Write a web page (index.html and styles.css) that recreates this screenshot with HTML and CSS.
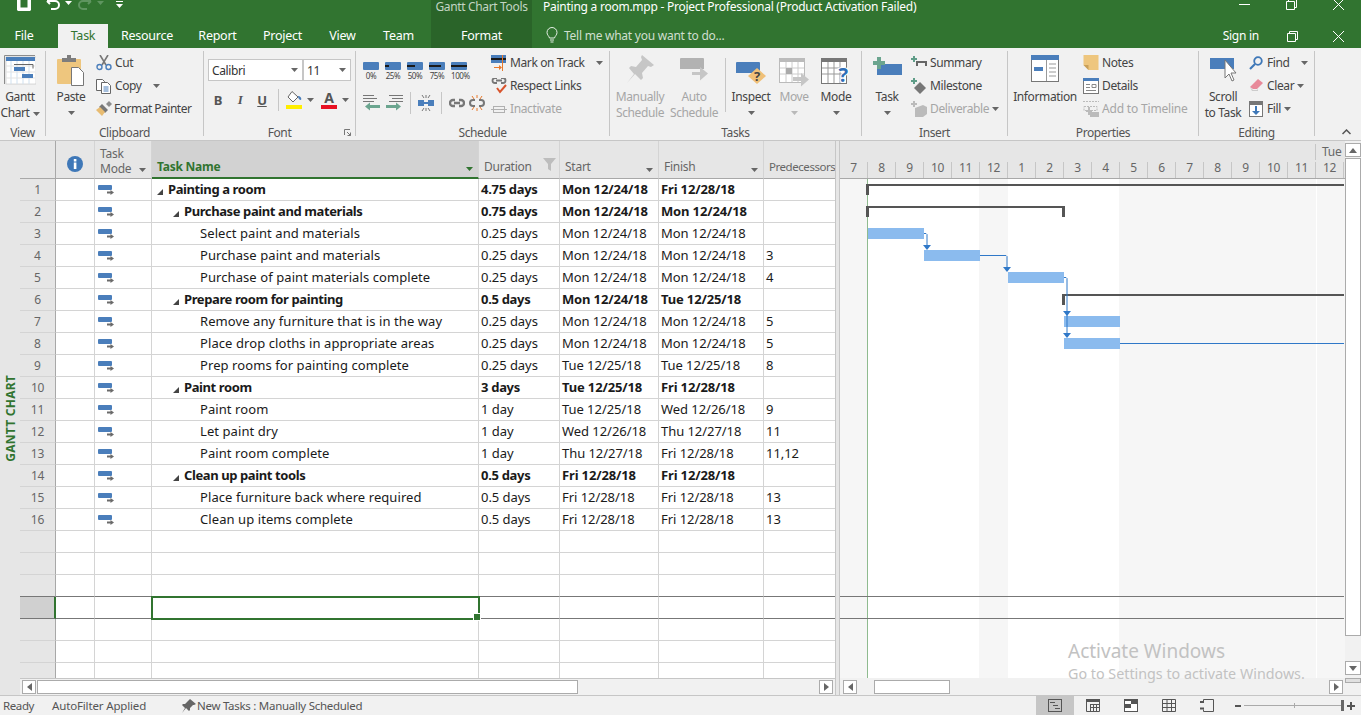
FILE: index.html
```html
<!DOCTYPE html>
<html lang="en">
  <head>
    <meta charset="UTF-8" />
    <title>Painting a room.mpp - Project Professional</title>
    <link rel="stylesheet" href="styles.css">
  </head>
  <body>
    <svg class="defs" width="0" height="0">
      <symbol id="mode" viewBox="0 0 16 12">
        <rect x="0" y="1" width="14" height="5" rx="1" fill="#4a7ebb" />
        <path d="M9 7.500h3.500V6l3.500 2.500-3.500 2.500V9.500H9z" fill="#6a6a6a" />
      </symbol>
      <symbol id="tri" viewBox="0 0 6 6">
        <polygon points="6,0 6,6 0,6" fill="#444" />
      </symbol>
      <symbol id="caret" viewBox="0 0 7 4">
        <polygon points="0,0 7,0 3.500,4" fill="#666" />
      </symbol>
      <symbol id="chain" viewBox="0 0 16 10">
        <path d="M6 2H4a3 3 0 0 0 0 6h2M10 2h2a3 3 0 0 1 0 6h-2M5 5h6" fill="none" stroke="#777" stroke-width="2.300" />
      </symbol>
    </svg>

    <!-- title bar -->
    <header class="titlebar">
      <div class="title-row">
        <div class="qa">
          <svg class="qa-save" width="14" height="11" viewBox="0 0 14 11"><path d="M0 0h3.500v7.500h7V0H14v10l-1 1H1l-1-1z" fill="#fff" /></svg>
          <svg class="qa-undo" width="14" height="10" viewBox="0 0 14 10"><path d="M1 1l3 3M1 1h8a4 4 0 0 1 0 8H5" fill="none" stroke="#fff" stroke-width="2" /></svg>
          <svg class="qa-caret" width="7" height="4"><polygon points="0,0 7,0 3.500,4" fill="#fff" /></svg>
          <svg class="qa-redo" width="14" height="10" viewBox="0 0 14 10"><path d="M13 1l-3 3M13 1H5a4 4 0 0 0 0 8h4" fill="none" stroke="#5f9560" stroke-width="2" /></svg>
          <svg class="qa-caret2" width="7" height="4"><polygon points="0,0 7,0 3.500,4" fill="#5f9560" /></svg>
          <svg class="qa-more" width="7" height="8"><rect x="0" y="0" width="7" height="1" fill="#fff" /><polygon points="0,3 7,3 3.500,7" fill="#fff" /></svg>
        </div>
        <div class="ctx-title">Gantt Chart Tools</div>
        <div class="doc-title">Painting a room.mpp - Project Professional (Product Activation Failed)</div>
        <div class="win-btns">
          <svg width="11" height="10"><rect x="0" y="4" width="11" height="1" fill="#fff" /></svg>
          <svg width="11" height="10"><path d="M.5 1.500h8v8h-8zM2.500 1.500v-2h8v8h-2" fill="none" stroke="#fff" /></svg>
          <svg width="11" height="10" viewBox="0 0 11 10"><path d="M0 -1l11 11M11 -1L0 10" stroke="#fff" /></svg>
        </div>
      </div>
      <nav class="tab-row">
        <div class="tab tab-file">File</div>
        <div class="tab tab-task active">Task</div>
        <div class="tab tab-resource">Resource</div>
        <div class="tab tab-report">Report</div>
        <div class="tab tab-project">Project</div>
        <div class="tab tab-view">View</div>
        <div class="tab tab-team">Team</div>
        <div class="tab tab-format">Format</div>
        <div class="tell-me">
          <svg width="12" height="16" viewBox="0 0 12 16"><path d="M3.500 11C3 9 1 8 1 5.500a5 5 0 0 1 10 0C11 8 9 9 8.500 11zM4 13h4M4.500 15h3" fill="none" stroke="#e6efe6" /></svg>
          <span>Tell me what you want to do...</span>
        </div>
        <div class="sign-in">Sign in</div>
        <div class="win-btns">
          <svg width="11" height="11"><path d="M.5 2.500h8v8h-8zM2.500 2.500v-2h8v8h-2" fill="none" stroke="#fff" /></svg>
          <svg width="11" height="11"><path d="M0 0l11 11M11 0L0 11" stroke="#fff" /></svg>
        </div>
      </nav>
    </header>

    <!-- ribbon -->
    <section class="ribbon">
      <div class="group g-view">
        <div class="group-body">
          <div class="big w-40">
            <div class="big-icon">
              <svg width="32" height="30" viewBox="0 0 32 30"><path d="M.5 29V.5H31" fill="none" stroke="#8c8c8c" /><rect x="2" y="2" width="30" height="27" fill="#fff" stroke="#b5b5b5" stroke-width=".5" /><rect x="2" y="2" width="29" height="4" fill="#4a7ebb" /><path d="M7 6v23M13 6v23M19 6v23M25 6v23" stroke="#cfe0ef" /><path d="M2 11h29M2 17h29M2 23h29" stroke="#e3e3e3" /><rect x="10" y="12" width="11" height="4" fill="#4a7ebb" /><rect x="18" y="19" width="11" height="4" fill="#4a7ebb" /><path d="M10 9.500h19v4" fill="none" stroke="#666" /></svg>
            </div>
            <span>Gantt</span>
            <span>Chart <svg class="caret-in" width="7" height="4"><use href="#caret" /></svg></span>
          </div>
        </div>
        <div class="group-label">View</div>
      </div>

      <div class="group g-clip">
        <div class="group-body">
          <div class="big w-50">
            <div class="big-icon">
              <svg width="30" height="31" viewBox="0 0 30 31"><rect x="1" y="4" width="24" height="25" rx="1" fill="#eec67e" /><path d="M6 7V3h5V0h4v3h5v4z" fill="#7d7d7d" /><path d="M15.500 12.500h7l5 5v13h-12z" fill="#fff" stroke="#777" /></svg>
            </div>
            <span>Paste</span>
            <svg class="caret-line" width="7" height="4"><use href="#caret" /></svg>
          </div>
          <div class="stack">
            <div class="small"><svg width="16" height="16" viewBox="0 0 16 16"><path d="M4 0l6 10M12 0L6 10" stroke="#777" stroke-width="1.600" /><circle cx="3.500" cy="12" r="2.500" fill="none" stroke="#4a7ebb" stroke-width="1.400" /><circle cx="12.500" cy="12" r="2.500" fill="none" stroke="#4a7ebb" stroke-width="1.400" /></svg><span>Cut</span></div>
            <div class="small"><svg width="16" height="16" viewBox="0 0 16 16"><path d="M.5 1.500h6l2 2v9h-8z" fill="#fff" stroke="#666" /><path d="M5.500 4.500h6l3 3v8h-9z" fill="#fff" stroke="#666" /><path d="M7.500 9h5M7.500 11h5M7.500 13h5" stroke="#4a7ebb" /></svg><span>Copy</span><svg class="caret-far" width="7" height="4"><use href="#caret" /></svg></div>
            <div class="small"><svg width="16" height="16" viewBox="0 0 16 16"><path d="M6 3l6 6-3 3-6-6z" fill="#777" /><path d="M10 3l3-3 3 3-3 3z" fill="#8c8c8c" /><path d="M4 6l5 5-3 4-6-6z" fill="#e8bc72" /></svg><span class="tight">Format Painter</span></div>
          </div>
        </div>
        <div class="group-label">Clipboard</div>
      </div>

      <div class="group g-font">
        <div class="group-body font-body">
          <div class="combos">
            <div class="combo combo-name">Calibri<svg width="7" height="4"><use href="#caret" /></svg></div>
            <div class="combo combo-size">11<svg width="7" height="4"><use href="#caret" /></svg></div>
          </div>
          <div class="font-tools">
            <b class="fmt">B</b>
            <i class="fmt fmt-i">I</i>
            <u class="fmt fmt-u">U</u>
            <div class="v-sep sep-font"></div>
            <svg class="fill-ico" width="16" height="18" viewBox="0 0 16 18"><path d="M6 .5l6 5.500-5 5L2 6z" fill="#fff" stroke="#666" /><path d="M12 5c2 0 4 2 3 4-2 0-3-2-3-4z" fill="#4a7ebb" /><rect x="0" y="14" width="16" height="4" fill="#ffee00" /></svg>
            <svg class="caret-sm" width="7" height="4"><use href="#caret" /></svg>
            <div class="font-a"><span>A</span></div>
            <svg class="caret-sm" width="7" height="4"><use href="#caret" /></svg>
          </div>
        </div>
        <div class="group-label">Font</div>
        <svg class="launcher" width="7" height="7" viewBox="0 0 7 7"><path d="M.5 6V.5H6M3 3l3.500 3.500M6.500 3.500v3h-3" fill="none" stroke="#777" /></svg>
      </div>

      <div class="group g-sched">
        <div class="group-body">
          <div class="sched-left">
            <div class="pct-row">
              <div class="pct"><span class="pct-bar"></span><em>0%</em></div>
              <div class="pct"><span class="pct-bar"><i class="p25"></i></span><em>25%</em></div>
              <div class="pct"><span class="pct-bar"><i class="p50"></i></span><em>50%</em></div>
              <div class="pct"><span class="pct-bar"><i class="p75"></i></span><em>75%</em></div>
              <div class="pct"><span class="pct-bar"><i class="p100"></i></span><em>100%</em></div>
            </div>
            <div class="sched-tools">
              <svg width="18" height="16" viewBox="0 0 18 16"><path d="M0 .5h11M0 3.500h14M0 6.500h11" stroke="#777" /><path d="M2 11.500l5-4v2.500h10v3H7v2.500z" fill="#6ba58f" /></svg>
              <svg width="18" height="16" viewBox="0 0 18 16"><path d="M4 .5h14M7 3.500h11M4 6.500h14" stroke="#777" /><path d="M16 11.500l-5-4v2.500H1v3h10v2.500z" fill="#6ba58f" /></svg>
              <div class="v-sep"></div>
              <svg width="16" height="16" viewBox="0 0 16 16"><path d="M0 5h6v6H0zM10 5h6v6h-6z" fill="#4a7ebb" /><rect x="6" y="7" width="4" height="2" fill="#4a7ebb" /><path d="M4 0l2 3M12 0l-2 3M8 0v3M4 16l2-3M12 16l-2-3M8 16v-3" stroke="#777" /></svg>
              <div class="v-sep"></div>
              <svg width="16" height="10"><use href="#chain" /></svg>
              <svg width="16" height="16" viewBox="0 0 16 16"><path d="M6 5H4a3 3 0 0 0 0 6h2M10 5h2a3 3 0 0 1 0 6h-2" fill="none" stroke="#777" stroke-width="2" /><path d="M8 0v3M8 13v3M3 1l2 3M13 1l-2 3M3 15l2-3M13 15l-2-3" stroke="#e8792b" /></svg>
            </div>
          </div>
          <div class="stack">
            <div class="small"><svg width="16" height="16" viewBox="0 0 16 16"><rect x="0" y="0" width="15" height="8" fill="#4a7ebb" /><rect x="0" y="3" width="15" height="2" fill="#1a1a1a" /><path d="M11.500 0v16" stroke="#e8792b" /><path d="M3 12h5V10l3 2.500-3 2.500v-2H3z" fill="#e8792b" /></svg><span>Mark on Track</span><svg class="caret-far" width="7" height="4"><use href="#caret" /></svg></div>
            <div class="small"><svg width="16" height="16" viewBox="0 0 16 16"><path d="M6 0H4a2.500 2.500 0 0 0 0 5h2M10 0h2a2.500 2.500 0 0 1 0 5h-2M5 2.500h6" fill="none" stroke="#777" stroke-width="1.800" /><path d="M6 10l3 4 6-7" fill="none" stroke="#d8532b" stroke-width="2" /></svg><span>Respect Links</span></div>
            <div class="small off"><svg width="16" height="16" viewBox="0 0 16 16"><rect x="2.500" y="5.500" width="11" height="6" fill="none" stroke="#b0b0b0" /><path d="M0 8.500h16" stroke="#b0b0b0" /></svg><span>Inactivate</span></div>
          </div>
        </div>
        <div class="group-label">Schedule</div>
      </div>

      <div class="group g-tasks">
        <div class="group-body">
          <div class="big off w-60">
            <div class="big-icon">
              <svg width="28" height="29" viewBox="0 0 28 29"><path d="M16 0l12 10-3 2-3-1-6 7 1 5-2 2-6-6-8 9 7-9-5-6 2-2 5 1 6-7-1-3z" fill="#c6c6c6" /></svg>
            </div>
            <span>Manually</span>
            <span>Schedule</span>
          </div>
          <div class="big off w-48">
            <div class="big-icon">
              <svg width="29" height="27" viewBox="0 0 29 27"><path d="M0 4a1 1 0 0 1 1-1h22a1 1 0 0 1 1 1v10H0z" fill="#b2b2b2" /><path d="M12 17h8V12l8 6.500-8 7V20h-8z" fill="#c6c6c6" /></svg>
            </div>
            <span>Auto</span>
            <span>Schedule</span>
          </div>
          <div class="v-sep sep-tall"></div>
          <div class="big w-42">
            <div class="big-icon">
              <svg width="31" height="31" viewBox="0 0 31 31"><path d="M0 8a1 1 0 0 1 1-1h22a1 1 0 0 1 1 1v10H0z" fill="#4a7ebb" /><path d="M21 13l9 8-9 8-9-8z" fill="#f0c078" /><text x="21" y="26" text-anchor="middle" class="qmark">?</text></svg>
            </div>
            <span>Inspect</span>
            <svg class="caret-line" width="7" height="4"><use href="#caret" /></svg>
          </div>
          <div class="big off w-44">
            <div class="big-icon">
              <svg width="30" height="32" viewBox="0 0 30 32"><rect x=".5" y="5.500" width="25" height="22" fill="#fff" stroke="#bbb" /><rect x="0" y="3" width="26" height="4" fill="#bbb" /><path d="M7 7v20M13 7v20M19 7v20M1 13h24M1 19h24" stroke="#ccc" /><rect x="7" y="13" width="6" height="6" fill="#aaa" /><path d="M14 22h8v-4l8 6.500-8 7V26h-8z" fill="#c6c6c6" /></svg>
            </div>
            <span>Move</span>
            <svg class="caret-line caret-off" width="7" height="4"><use href="#caret" /></svg>
          </div>
          <div class="big w-40">
            <div class="big-icon">
              <svg width="30" height="34" viewBox="0 0 30 34"><rect x=".5" y="5.500" width="25" height="23" fill="#fff" stroke="#777" /><rect x="0" y="3" width="26" height="4" fill="#777" /><path d="M7 7v21M13 7v21M19 7v21M1 13h24M1 19h24" stroke="#999" /><text x="22" y="27" text-anchor="middle" class="qmark qmark-blue">?</text></svg>
            </div>
            <span>Mode</span>
            <svg class="caret-line" width="7" height="4"><use href="#caret" /></svg>
          </div>
        </div>
        <div class="group-label">Tasks</div>
      </div>

      <div class="group g-insert">
        <div class="group-body">
          <div class="big w-38">
            <div class="big-icon">
              <svg width="29" height="24" viewBox="0 0 29 24"><rect x="4" y="9" width="25" height="11" fill="#4a7ebb" /><path d="M4 2h4v4h4v4H8v4H4v-4H0V6h4z" fill="#6ba58f" /></svg>
            </div>
            <span>Task</span>
            <svg class="caret-line" width="7" height="4"><use href="#caret" /></svg>
          </div>
          <div class="stack">
            <div class="small"><svg width="16" height="14" viewBox="0 0 16 14"><path d="M2 0h2v2h2v2H4v2H2V4H0V2h2z" fill="#5f9d88" /><path d="M5 5h11v5h-2V7H7v3H5z" fill="#666" /></svg><span>Summary</span></div>
            <div class="small"><svg width="16" height="16" viewBox="0 0 16 16"><path d="M2 0h2v2h2v2H4v2H2V4H0V2h2z" fill="#5f9d88" /><path d="M9 4l6 6-6 6-6-6z" fill="#777" /></svg><span>Milestone</span></div>
            <div class="small off"><svg width="16" height="16" viewBox="0 0 16 16"><path d="M2 0h2v2h2v2H4v2H2V4H0V2h2z" fill="#bbb" /><path d="M4 7l8-3 4 2v7l-4 3H4z" fill="#bbb" /></svg><span>Deliverable</span><svg class="caret-near" width="7" height="4"><use href="#caret" /></svg></div>
          </div>
        </div>
        <div class="group-label">Insert</div>
      </div>

      <div class="group g-props">
        <div class="group-body">
          <div class="big w-66">
            <div class="big-icon">
              <svg width="28" height="27" viewBox="0 0 28 27"><rect x=".5" y=".5" width="27" height="26" fill="#fff" stroke="#777" /><rect x="0" y="0" width="28" height="5" fill="#4a7ebb" /><path d="M15.500 5v21" stroke="#999" /><rect x="3" y="12" width="9" height="4" fill="#4a7ebb" /><path d="M18 9h7M18 13h7M18 17h7M18 21h7" stroke="#999" /></svg>
            </div>
            <span>Information</span>
          </div>
          <div class="stack">
            <div class="small"><svg width="15" height="15" viewBox="0 0 15 15"><path d="M0 0h15v15H5l-5-5z" fill="#eec67e" /><path d="M0 10h5v5z" fill="#c9a05a" /></svg><span>Notes</span></div>
            <div class="small"><svg width="16" height="16" viewBox="0 0 16 16"><rect x=".5" y=".5" width="15" height="15" fill="#fff" stroke="#777" /><rect x="0" y="0" width="16" height="3" fill="#4a7ebb" /><path d="M3 6.500h4M3 9.500h4M3 12.500h10M9 6.500h4v3H9z" fill="none" stroke="#888" /></svg><span>Details</span></div>
            <div class="small off"><svg width="16" height="16" viewBox="0 0 16 16"><path d="M0 .5h16M1 5.500h13v4H1z" fill="none" stroke="#bbb" stroke-dasharray="2 1" /><path d="M5 6h2v3h2v2H7v3H5v-3H3V9h2z" fill="#bbb" /><rect x="7" y="11" width="9" height="5" fill="#bbb" /></svg><span class="wide">Add to Timeline</span></div>
          </div>
        </div>
        <div class="group-label">Properties</div>
      </div>

      <div class="group g-edit">
        <div class="group-body">
          <div class="big w-40">
            <div class="big-icon">
              <svg width="27" height="28" viewBox="0 0 27 28"><rect x="0" y="3" width="24" height="11" fill="#4a7ebb" /><path d="M15 5v18l4-4 3 7 2-1-3-7h5z" fill="#fff" stroke="#777" /></svg>
            </div>
            <span>Scroll</span>
            <span>to Task</span>
          </div>
          <div class="stack">
            <div class="small"><svg width="14" height="14" viewBox="0 0 14 14"><circle cx="9" cy="5" r="3.800" fill="none" stroke="#3f78b8" stroke-width="1.800" /><path d="M6 8l-5 5" stroke="#3f78b8" stroke-width="2.200" /></svg><span>Find</span><svg class="caret-far" width="7" height="4"><use href="#caret" /></svg></div>
            <div class="small"><svg width="14" height="14" viewBox="0 0 14 14"><path d="M9 0l5 4-6 6H4L1 8z" fill="#e88a9a" /><path d="M1 8l3 3h4l1-1v2H3z" fill="#ccc" /></svg><span>Clear</span><svg class="caret-near" width="7" height="4"><use href="#caret" /></svg></div>
            <div class="small"><svg width="14" height="16" viewBox="0 0 14 16"><rect x=".5" y=".5" width="13" height="15" fill="#fff" stroke="#777" /><rect x="0" y="0" width="14" height="4" fill="#777" /><path d="M6 5h2v5h3l-4 4-4-4h3z" fill="#3f78b8" /></svg><span>Fill</span><svg class="caret-near" width="7" height="4"><use href="#caret" /></svg></div>
          </div>
        </div>
        <div class="group-label">Editing</div>
      </div>

      <svg class="collapse" width="9" height="6" viewBox="0 0 9 6"><path d="M.5 5L4.500 1l4 4" fill="none" stroke="#555" stroke-width="1.500" /></svg>
    </section>

    <!-- main view -->
    <main class="workspace">
      <div class="view-strip"><span>GANTT CHART</span></div>

      <div class="grid-pane">
        <div class="grid-clip">
          <table class="grid">
            <colgroup>
              <col class="c-num" /><col class="c-ind" /><col class="c-mode" /><col class="c-name" /><col class="c-dur" /><col class="c-start" /><col class="c-fin" /><col class="c-pred" />
            </colgroup>
            <thead>
              <tr>
                <th class="num"></th>
                <th class="ind"><svg width="16" height="16" viewBox="0 0 16 16"><circle cx="8" cy="8" r="8" fill="#3f78b8" /><rect x="6.800" y="6.500" width="2.600" height="6.500" fill="#fff" /><rect x="6.800" y="3" width="2.600" height="2.500" fill="#fff" /></svg></th>
                <th class="mode-h">Task<br />Mode<svg class="h-caret" width="7" height="4"><use href="#caret" /></svg></th>
                <th class="name-h">Task Name<svg class="h-caret" width="7" height="4"><polygon points="0,0 7,0 3.500,4" fill="#317430" /></svg></th>
                <th>Duration<svg class="h-filter" width="13" height="13" viewBox="0 0 13 13"><path d="M0 0h13L8 6v7l-3-2V6z" fill="#bdbdbd" /></svg></th>
                <th>Start<svg class="h-caret" width="7" height="4"><use href="#caret" /></svg></th>
                <th>Finish<svg class="h-caret" width="7" height="4"><use href="#caret" /></svg></th>
                <th class="pred-h">Predecessors</th>
              </tr>
            </thead>
            <tbody>
              <tr class="sum"><td class="num">1</td><td></td><td class="md"><svg width="16" height="12"><use href="#mode" /></svg></td><td class="nm l0"><svg width="6" height="6"><use href="#tri" /></svg>Painting a room</td><td>4.75 days</td><td class="dt">Mon 12/24/18</td><td class="dt">Fri 12/28/18</td><td></td></tr>
              <tr class="sum"><td class="num">2</td><td></td><td class="md"><svg width="16" height="12"><use href="#mode" /></svg></td><td class="nm l1"><svg width="6" height="6"><use href="#tri" /></svg>Purchase paint and materials</td><td>0.75 days</td><td class="dt">Mon 12/24/18</td><td class="dt">Mon 12/24/18</td><td></td></tr>
              <tr><td class="num">3</td><td></td><td class="md"><svg width="16" height="12"><use href="#mode" /></svg></td><td class="nm l2">Select paint and materials</td><td>0.25 days</td><td class="dt">Mon 12/24/18</td><td class="dt">Mon 12/24/18</td><td></td></tr>
              <tr><td class="num">4</td><td></td><td class="md"><svg width="16" height="12"><use href="#mode" /></svg></td><td class="nm l2">Purchase paint and materials</td><td>0.25 days</td><td class="dt">Mon 12/24/18</td><td class="dt">Mon 12/24/18</td><td>3</td></tr>
              <tr><td class="num">5</td><td></td><td class="md"><svg width="16" height="12"><use href="#mode" /></svg></td><td class="nm l2">Purchase of paint materials complete</td><td>0.25 days</td><td class="dt">Mon 12/24/18</td><td class="dt">Mon 12/24/18</td><td>4</td></tr>
              <tr class="sum"><td class="num">6</td><td></td><td class="md"><svg width="16" height="12"><use href="#mode" /></svg></td><td class="nm l1"><svg width="6" height="6"><use href="#tri" /></svg>Prepare room for painting</td><td>0.5 days</td><td class="dt">Mon 12/24/18</td><td class="dt">Tue 12/25/18</td><td></td></tr>
              <tr><td class="num">7</td><td></td><td class="md"><svg width="16" height="12"><use href="#mode" /></svg></td><td class="nm l2">Remove any furniture that is in the way</td><td>0.25 days</td><td class="dt">Mon 12/24/18</td><td class="dt">Mon 12/24/18</td><td>5</td></tr>
              <tr><td class="num">8</td><td></td><td class="md"><svg width="16" height="12"><use href="#mode" /></svg></td><td class="nm l2">Place drop cloths in appropriate areas</td><td>0.25 days</td><td class="dt">Mon 12/24/18</td><td class="dt">Mon 12/24/18</td><td>5</td></tr>
              <tr><td class="num">9</td><td></td><td class="md"><svg width="16" height="12"><use href="#mode" /></svg></td><td class="nm l2">Prep rooms for painting complete</td><td>0.25 days</td><td class="dt">Tue 12/25/18</td><td class="dt">Tue 12/25/18</td><td>8</td></tr>
              <tr class="sum"><td class="num">10</td><td></td><td class="md"><svg width="16" height="12"><use href="#mode" /></svg></td><td class="nm l1"><svg width="6" height="6"><use href="#tri" /></svg>Paint room</td><td>3 days</td><td class="dt">Tue 12/25/18</td><td class="dt">Fri 12/28/18</td><td></td></tr>
              <tr><td class="num">11</td><td></td><td class="md"><svg width="16" height="12"><use href="#mode" /></svg></td><td class="nm l2">Paint room</td><td>1 day</td><td class="dt">Tue 12/25/18</td><td class="dt">Wed 12/26/18</td><td>9</td></tr>
              <tr><td class="num">12</td><td></td><td class="md"><svg width="16" height="12"><use href="#mode" /></svg></td><td class="nm l2">Let paint dry</td><td>1 day</td><td class="dt">Wed 12/26/18</td><td class="dt">Thu 12/27/18</td><td>11</td></tr>
              <tr><td class="num">13</td><td></td><td class="md"><svg width="16" height="12"><use href="#mode" /></svg></td><td class="nm l2">Paint room complete</td><td>1 day</td><td class="dt">Thu 12/27/18</td><td class="dt">Fri 12/28/18</td><td>11,12</td></tr>
              <tr class="sum"><td class="num">14</td><td></td><td class="md"><svg width="16" height="12"><use href="#mode" /></svg></td><td class="nm l1"><svg width="6" height="6"><use href="#tri" /></svg>Clean up paint tools</td><td>0.5 days</td><td class="dt">Fri 12/28/18</td><td class="dt">Fri 12/28/18</td><td></td></tr>
              <tr><td class="num">15</td><td></td><td class="md"><svg width="16" height="12"><use href="#mode" /></svg></td><td class="nm l2">Place furniture back where required</td><td>0.5 days</td><td class="dt">Fri 12/28/18</td><td class="dt">Fri 12/28/18</td><td>13</td></tr>
              <tr><td class="num">16</td><td></td><td class="md"><svg width="16" height="12"><use href="#mode" /></svg></td><td class="nm l2">Clean up items complete</td><td>0.5 days</td><td class="dt">Fri 12/28/18</td><td class="dt">Fri 12/28/18</td><td>13</td></tr>
              <tr><td class="num"></td><td></td><td></td><td></td><td></td><td></td><td></td><td></td></tr>
              <tr><td class="num"></td><td></td><td></td><td></td><td></td><td></td><td></td><td></td></tr>
              <tr class="before-sel"><td class="num"></td><td></td><td></td><td></td><td></td><td></td><td></td><td></td></tr>
              <tr class="sel"><td class="num"></td><td></td><td></td><td class="cell-sel"></td><td></td><td></td><td></td><td></td></tr>
              <tr><td class="num"></td><td></td><td></td><td></td><td></td><td></td><td></td><td></td></tr>
              <tr><td class="num"></td><td></td><td></td><td></td><td></td><td></td><td></td><td></td></tr>
              <tr><td class="num"></td><td></td><td></td><td></td><td></td><td></td><td></td><td></td></tr>
            </tbody>
          </table>
        </div>
        <div class="hscroll grid-scroll">
          <div class="sb-btn"><svg width="5" height="8"><polygon points="5,0 5,8 0,4" fill="#666" /></svg></div>
          <div class="sb-thumb thumb-grid"></div>
          <div class="sb-btn sb-end"><svg width="5" height="8"><polygon points="0,0 0,8 5,4" fill="#666" /></svg></div>
        </div>
      </div>

      <div class="divider"></div>

      <div class="chart-pane">
        <div class="timescale">
          <div class="tier-top"><span>Tue</span></div>
          <div class="tier-hours">
            <span class="first">7</span><span>8</span><span>9</span><span>10</span><span>11</span><span>12</span><span>1</span><span>2</span><span>3</span><span>4</span><span>5</span><span>6</span><span>7</span><span>8</span><span>9</span><span>10</span><span>11</span><span>12</span>
          </div>
        </div>
        <svg class="gantt" width="505" height="499" viewBox="840 179 505 499">
          <g fill="#f6f6f6">
            <rect x="840" y="179" width="27" height="499" />
            <rect x="979" y="179" width="29" height="499" />
            <rect x="1119" y="179" width="197" height="499" />
            <rect x="1317" y="179" width="28" height="499" />
          </g>
          <rect x="867" y="179" width="1" height="499" fill="#8fbb8f" />
          <path d="M840 596.500h504M840 618.500h504" stroke="#777" />
          <g fill="#8bbbee">
            <rect x="868" y="228" width="56" height="11" />
            <rect x="924" y="250" width="56" height="11" />
            <rect x="1008" y="272" width="56" height="11" />
            <rect x="1064" y="316" width="56" height="11" />
            <rect x="1064" y="338" width="56" height="11" />
          </g>
          <g fill="#555">
            <path d="M866 184h478v2H869v9h-3z" />
            <path d="M866 206h199v11h-3v-9H869v9h-3z" />
            <path d="M1062 294h282v2h-279v9h-3z" />
          </g>
          <g fill="none" stroke="#2f78c8">
            <path d="M924 233.500h2l1 1V246" />
            <path d="M980 255.500h26l1 1V268" />
            <path d="M1064 277.500h2l1 1V334" />
            <path d="M1120 343.500h224" />
          </g>
          <g fill="#2f78c8">
            <polygon points="923,245 931,245 927,250" />
            <polygon points="1003,267 1011,267 1007,272" />
            <polygon points="1063,311 1071,311 1067,316" />
            <polygon points="1063,333 1071,333 1067,338" />
          </g>
        </svg>
        <div class="hscroll chart-scroll">
          <div class="sb-btn"><svg width="5" height="8"><polygon points="5,0 5,8 0,4" fill="#666" /></svg></div>
          <div class="sb-thumb thumb-chart"></div>
          <div class="sb-btn sb-end"><svg width="5" height="8"><polygon points="0,0 0,8 5,4" fill="#666" /></svg></div>
        </div>
      </div>

      <div class="vscroll">
        <div class="sb-btn v-btn"><svg width="8" height="5"><polygon points="0,5 8,5 4,0" fill="#666" /></svg></div>
        <div class="sb-thumb v-thumb"></div>
        <div class="sb-btn v-btn v-down"><svg width="8" height="5"><polygon points="0,0 8,0 4,5" fill="#666" /></svg></div>
        <div class="v-grip"></div>
      </div>

      <div class="activate">
        <div class="act-1">Activate Windows</div>
        <div class="act-2">Go to Settings to activate Windows.</div>
      </div>
    </main>

    <!-- status bar -->
    <footer class="statusbar">
      <span class="st-ready">Ready</span>
      <span class="st-filter">AutoFilter Applied</span>
      <svg class="st-pin" width="14" height="14" viewBox="0 0 14 14"><path d="M8 0l6 5-2 1-1 0-3 3 0 2-1 1-3-3-4 5 3-5-3-3 1-1 2 0 3-3z" fill="#666" /></svg>
      <span class="st-new">New Tasks : Manually Scheduled</span>
      <div class="views">
        <div class="view-btn on"><svg width="14" height="13" viewBox="0 0 14 13"><rect x=".5" y=".5" width="13" height="12" fill="none" stroke="#555" /><path d="M2 3.500h5M5 6.500h5M7 9.500h5" stroke="#555" /></svg></div>
        <div class="view-btn"><svg width="14" height="13" viewBox="0 0 14 13"><rect x="0" y="0" width="14" height="3" fill="#555" /><path d="M.5 3v9.500h13V3M4.500 5v8M7.500 5v8M10.500 5v8M5 5.500h8M5 8.500h8" fill="none" stroke="#555" /></svg></div>
        <div class="view-btn"><svg width="14" height="13" viewBox="0 0 14 13"><rect x=".5" y=".5" width="13" height="12" fill="#fff" stroke="#555" /><rect x="0" y="0" width="14" height="2" fill="#555" /><rect x="7" y="2" width="7" height="3" fill="#555" /><rect x="0" y="5" width="7" height="4" fill="#555" /></svg></div>
        <div class="view-btn"><svg width="14" height="13" viewBox="0 0 14 13"><path d="M.5.500h13v12H.5zM5 .5v12M9.500 .5v12M.5 4.500h13M.5 8.500h13" fill="none" stroke="#555" /></svg></div>
        <div class="view-btn"><svg width="14" height="13" viewBox="0 0 14 13"><path d="M3.500 .5h10v12h-10" fill="none" stroke="#555" /><path d="M0 3h4M0 9.500h4" stroke="#555" stroke-width="2" /><path d="M3.500 .5v2M3.500 10.500v2" stroke="#555" /></svg></div>
      </div>
      <div class="zoom-ctl">
        <span class="z-minus"></span>
        <div class="z-track"><i class="z-mid"></i><i class="z-thumb"></i></div>
        <span class="z-plus"></span>
      </div>
    </footer>
  </body>
</html>
```

FILE: styles.css
```css
* {
  margin: 0;
  padding: 0;
  box-sizing: border-box;
}

body {
  width: 1361px;
  height: 715px;
  overflow: hidden;
  background: #f1f1f1;
  color: #444;
  font-family: "Noto Sans", "Open Sans", sans-serif;
  font-size: 12px;
  letter-spacing: -0.25px;
}

svg {
  display: block;
  flex: none;
}

.defs {
  position: absolute;
}

/* title bar */
.titlebar {
  height: 48px;
  background: #317430;
  color: #fff;
}
.title-row,
.tab-row {
  display: flex;
  height: 24px;
}
.qa {
  display: flex;
  align-items: flex-start;
  width: 431px;
  padding-left: 17px;
}
.qa-undo {
  margin-left: 15px;
}
.qa-caret {
  margin: 1px 0 0 5px;
}
.qa-redo {
  margin-left: 6px;
}
.qa-caret2 {
  margin: 1px 0 0 5px;
}
.qa-more {
  margin: 1px 0 0 12px;
}
.ctx-title {
  width: 101px;
  background: #2a6429;
  color: #c3d5c3;
  text-align: center;
  line-height: 14px;
  letter-spacing: -0.35px;
}
.doc-title {
  padding-left: 11px;
  line-height: 14px;
}
.win-btns {
  display: flex;
  margin-left: auto;
  padding-right: 17px;
}
.title-row .win-btns {
  gap: 36px;
}
.tab-row .win-btns {
  gap: 35px;
  margin-left: 28px;
  padding-top: 7px;
  padding-right: 17px;
}
.tab {
  text-align: center;
  line-height: 24px;
  font-size: 12.500px;
}
.tab.active {
  background: #f1f1f1;
  color: #317430;
}
.tab-file {
  width: 48px;
  margin-right: 10px;
}
.tab-task {
  width: 50px;
}
.tab-resource {
  width: 78px;
}
.tab-report {
  width: 63px;
}
.tab-project {
  width: 67px;
}
.tab-view {
  width: 53px;
}
.tab-team {
  width: 59px;
  margin-right: 3px;
}
.tab-format {
  width: 101px;
  background: #2a6429;
}
.tell-me {
  display: flex;
  align-items: center;
  gap: 6px;
  height: 22px;
  margin-left: 14px;
  color: #cfdfcf;
}
.sign-in {
  margin-left: auto;
  line-height: 24px;
}

/* ribbon */
.ribbon {
  position: relative;
  display: flex;
  height: 93px;
  padding-top: 3px;
  background: #f1f1f1;
  border-bottom: 1px solid #c6c6c6;
  letter-spacing: -0.38px;
}
.group {
  position: relative;
  display: flex;
  flex-direction: column;
  height: 85px;
  border-right: 1px solid #c6c6c6;
}
.group-body {
  display: flex;
  height: 73px;
}
.group-label {
  height: 12px;
  line-height: 18px;
  text-align: center;
  color: #555;
}
.g-view { width: 46px; }
.g-clip { width: 158px; }
.g-font { width: 152px; }
.g-sched { width: 254px; }
.g-tasks { width: 252px; }
.g-insert { width: 146px; }
.g-props { width: 191px; }
.g-edit { width: 116px; }

.big {
  display: flex;
  flex-direction: column;
  align-items: center;
  flex: none;
  line-height: 16px;
}
.big > span {
  display: flex;
  align-items: center;
  gap: 3px;
  white-space: nowrap;
}
.big-icon {
  display: flex;
  align-items: flex-start;
  justify-content: center;
  width: 100%;
  height: 38px;
  padding-top: 4px;
}
.w-38 { width: 38px; }
.w-40 { width: 40px; }
.w-42 { width: 42px; }
.w-44 { width: 44px; }
.w-48 { width: 48px; }
.w-50 { width: 50px; }
.w-60 { width: 60px; }
.w-66 { width: 66px; }
.off {
  color: #a6a6a6;
}
.caret-line {
  margin-top: 6px;
}
.caret-off {
  opacity: 0.4;
}
.caret-in {
  margin-top: 1px;
}
.stack {
  display: flex;
  flex-direction: column;
  flex: none;
}
.small {
  display: flex;
  align-items: center;
  gap: 3px;
  height: 23px;
  white-space: nowrap;
}
.small > svg:first-child {
  width: 16px;
}
.tight {
  margin-left: -1px;
  letter-spacing: -0.5px;
}
.wide {
  letter-spacing: -0.18px;
}
.caret-far {
  margin-left: 8px;
}
.caret-near {
  margin-left: 0;
}
.g-sched .group-body { padding-left: 7px; }
.g-insert .group-body { padding-left: 6px; }
.g-insert .stack { margin-left: 5px; }
.g-props .group-body { padding-left: 4px; }
.g-props .stack { margin-left: 5px; }
.g-edit .group-body { padding-left: 4px; }
.g-edit .stack { margin-left: 5px; }

.v-sep {
  flex: none;
  width: 1px;
  height: 22px;
  background: #c6c6c6;
}
.sep-tall {
  height: 54px;
  margin: 7px 4px 0 7px;
}

/* font group */
.font-body {
  flex-direction: column;
  padding-left: 4px;
}
.combos {
  display: flex;
  margin-top: 8px;
}
.combo {
  display: flex;
  align-items: center;
  justify-content: space-between;
  height: 22px;
  padding: 0 4px 0 3px;
  background: #fff;
  border: 1px solid #c6c6c6;
  color: #333;
}
.combo-name { width: 95px; }
.combo-size { width: 48px; }
.font-tools {
  display: flex;
  align-items: center;
  margin: 8px 0 0 -1px;
}
.fmt {
  width: 22px;
  text-align: center;
  font-size: 13px;
  font-style: normal;
  color: #555;
}
.fmt-i {
  font-family: "Liberation Serif", serif;
  font-style: italic;
  font-weight: 700;
}
.fmt-u {
  font-weight: 700;
}
.sep-font {
  margin: 0 7px 0 5px;
}
.caret-sm {
  margin-left: 5px;
}
.font-a {
  width: 16px;
  height: 18px;
  margin-left: 7px;
  border-bottom: 4px solid #e81123;
  text-align: center;
  line-height: 14px;
  font-size: 14px;
  font-weight: 700;
  color: #555;
}
.launcher {
  position: absolute;
  right: 4px;
  bottom: 0;
}

/* schedule group */
.sched-left {
  width: 128px;
}
.pct-row {
  display: flex;
  gap: 6px;
  margin-top: 11px;
}
.pct {
  width: 16px;
  text-align: center;
}
.pct em {
  display: block;
  margin-top: 1px;
  font-style: normal;
  font-size: 8px;
  line-height: 9px;
  letter-spacing: -0.4px;
}
.pct-bar {
  display: block;
  position: relative;
  height: 8px;
  border-radius: 1px;
  background: #4a7ebb;
}
.pct-bar i {
  display: block;
  position: absolute;
  left: 0;
  top: 3px;
  height: 2px;
  background: #1a1a1a;
}
.p25 { width: 4px; }
.p50 { width: 8px; }
.p75 { width: 12px; }
.p100 { width: 16px; }
.sched-tools {
  display: flex;
  align-items: center;
  gap: 4px;
  margin-top: 12px;
}
.sched-tools .v-sep {
  margin: 0 3px;
}
.qmark {
  font-family: "Noto Sans", sans-serif;
  font-size: 13px;
  font-weight: 700;
  fill: #444;
}
.qmark-blue {
  font-size: 20px;
  fill: #2f6fb8;
  stroke: #fff;
  stroke-width: 2px;
  paint-order: stroke;
}
.collapse {
  position: absolute;
  right: 10px;
  bottom: 5px;
}

/* workspace */
.workspace {
  position: relative;
  display: flex;
  height: 554px;
  background: #f1f1f1;
}
.view-strip {
  display: flex;
  align-items: center;
  justify-content: center;
  width: 20px;
  background: #e6e6e6;
}
.view-strip span {
  writing-mode: vertical-rl;
  transform: rotate(180deg);
  color: #317430;
  font-size: 12px;
  font-weight: 700;
  letter-spacing: 0.25px;
}
.grid-pane {
  display: flex;
  flex-direction: column;
  width: 815px;
}
.grid-clip {
  height: 537px;
  overflow: hidden;
  background: #fff;
}
.grid {
  table-layout: fixed;
  width: 815px;
  border-collapse: separate;
  border-spacing: 0;
  color: #1a1a1a;
  font-size: 13px;
  letter-spacing: -0.05px;
}
.c-num { width: 36px; }
.c-ind { width: 39px; }
.c-mode { width: 57px; }
.c-name { width: 327px; }
.c-dur { width: 81px; }
.c-start { width: 99px; }
.c-fin { width: 105px; }
.c-pred { width: 71px; }
.grid th {
  position: relative;
  height: 38px;
  padding: 0 0 4px 5px;
  background: #e6e6e6;
  border-right: 1px solid #d4d4d4;
  border-bottom: 1px solid #a8a8a8;
  color: #666;
  font-size: 12px;
  font-weight: 400;
  line-height: 15px;
  letter-spacing: -0.25px;
  text-align: left;
  vertical-align: bottom;
  white-space: nowrap;
  overflow: hidden;
}
.grid th.num {
  border-right: 1px solid #a8a8a8;
}
.grid th.ind {
  padding: 0 0 6px 11px;
}
.grid th.mode-h {
  padding-bottom: 2px;
}
.grid th.name-h {
  padding-bottom: 3px;
  background: #d2d2d2;
  border-bottom: 2px solid #317430;
  color: #317430;
  font-weight: 700;
}
.grid th.pred-h {
  border-right: 0;
  font-size: 11.500px;
  letter-spacing: -0.45px;
}
.h-caret {
  position: absolute;
  right: 5px;
  bottom: 6px;
}
.h-filter {
  position: absolute;
  right: 3px;
  top: 17px;
}
.grid td {
  height: 22px;
  padding: 0 0 0 2px;
  border-right: 1px solid #d4d4d4;
  border-bottom: 1px solid #d4d4d4;
  line-height: 21px;
  white-space: nowrap;
  overflow: hidden;
}
.grid td.num {
  padding: 0;
  background: #e6e6e6;
  border-right-color: #a8a8a8;
  color: #666;
  font-size: 12px;
  text-align: center;
}
.grid td:last-child {
  border-right: 0;
}
.grid td.md {
  padding-left: 3px;
}
.grid td.nm {
  letter-spacing: 0.08px;
}
.sum td {
  font-weight: 700;
  letter-spacing: -0.3px;
}
.grid .sum td.nm {
  letter-spacing: -0.4px;
}
.sum td.dt {
  letter-spacing: -0.15px;
}
.sum td.num {
  font-weight: 400;
}
.grid td.nm svg {
  display: inline-block;
  margin-right: 5px;
  vertical-align: -1px;
}
.grid td.l0 { padding-left: 5px; }
.grid td.l1 { padding-left: 21px; }
.grid td.l2 { padding-left: 48px; }
.before-sel td,
.sel td {
  border-bottom-color: #777;
}
.grid .sel td.num {
  background: #d0d0d0;
  border-bottom-color: #777;
  border-right: 2px solid #317430;
}
.grid td.cell-sel {
  position: relative;
  overflow: visible;
  outline: 2px solid #317430;
  outline-offset: -1px;
}
.cell-sel::after {
  content: "";
  position: absolute;
  right: -3px;
  bottom: -3px;
  width: 6px;
  height: 6px;
  background: #317430;
  border: 1px solid #fff;
  box-sizing: content-box;
}

/* scroll bars */
.hscroll {
  display: flex;
  align-items: center;
  height: 17px;
  padding: 1px 2px;
  background: #f1f1f1;
}
.grid-scroll {
  border-top: 1px solid #c6c6c6;
}
.sb-btn {
  display: flex;
  align-items: center;
  justify-content: center;
  flex: none;
  width: 14px;
  height: 14px;
  background: #fff;
  border: 1px solid #ababab;
}
.sb-end {
  margin-left: auto;
}
.sb-thumb {
  height: 14px;
  background: #fff;
  border: 1px solid #ababab;
}
.thumb-grid {
  width: 541px;
  margin-left: 1px;
}
.thumb-chart {
  width: 76px;
  margin-left: 17px;
}
.divider {
  width: 5px;
  background: #e6e6e6;
  border-left: 1px solid #c6c6c6;
  border-right: 1px solid #c6c6c6;
}
.chart-pane {
  display: flex;
  flex-direction: column;
  width: 505px;
}
.timescale {
  height: 38px;
  background: #e6e6e6;
  border-bottom: 1px solid #a8a8a8;
  color: #666;
  overflow: hidden;
}
.tier-top {
  height: 21px;
  padding: 3px 0 0 475px;
  line-height: 16px;
  white-space: nowrap;
}
.tier-top span {
  display: block;
  padding-left: 6px;
  border-left: 1px solid #c6c6c6;
}
.tier-hours {
  display: flex;
  height: 16px;
}
.tier-hours span {
  flex: none;
  width: 28px;
  border-right: 1px solid #c6c6c6;
  text-align: center;
  line-height: 12px;
}
.gantt {
  background: #fff;
}
.chart-scroll .sb-btn:first-child {
  margin-left: 1px;
}
.vscroll {
  display: flex;
  flex-direction: column;
  align-items: stretch;
  width: 16px;
  padding-top: 2px;
  background: #f1f1f1;
}
.v-btn {
  width: 16px;
  height: 14px;
}
.v-thumb {
  width: 16px;
  height: 478px;
  margin-top: 1px;
}
.v-down {
  margin-top: 25px;
}
.v-grip {
  height: 5px;
  margin-top: 3px;
  background: #e0e0e0;
  border: 1px solid #ababab;
}
.activate {
  position: absolute;
  left: 1068px;
  top: 497px;
  color: #c2c2c2;
  white-space: nowrap;
  letter-spacing: 0;
}
.act-1 {
  font-size: 19px;
  line-height: 26px;
}
.act-2 {
  font-size: 14.300px;
  line-height: 20px;
}

/* status bar */
.statusbar {
  display: flex;
  align-items: center;
  height: 20px;
  border-top: 1px solid #c6c6c6;
  background: #f1f1f1;
  color: #555;
  font-size: 11.500px;
  letter-spacing: -0.15px;
}
.st-ready {
  width: 52px;
  padding-left: 3px;
  letter-spacing: -0.4px;
}
.st-filter {
  width: 130px;
}
.st-new {
  margin-left: 1px;
  letter-spacing: -0.28px;
}
.views {
  display: flex;
  margin-left: auto;
  height: 19px;
}
.view-btn {
  display: flex;
  align-items: center;
  justify-content: center;
  width: 38px;
}
.view-btn.on {
  background: #c6c6c6;
}
.zoom-ctl {
  display: flex;
  align-items: center;
  gap: 3px;
  margin: 0 6px 0 9px;
}
.z-minus {
  width: 6px;
  height: 2px;
  background: #555;
}
.z-plus {
  position: relative;
  width: 8px;
  height: 2px;
  background: #555;
}
.z-plus::after {
  content: "";
  position: absolute;
  left: 3px;
  top: -3px;
  width: 2px;
  height: 8px;
  background: #555;
}
.z-track {
  position: relative;
  width: 100px;
  height: 1px;
  background: #aaa;
}
.z-mid {
  position: absolute;
  left: 50px;
  top: -2px;
  width: 1px;
  height: 5px;
  background: #aaa;
}
.z-thumb {
  position: absolute;
  right: 0;
  top: -5px;
  width: 3px;
  height: 11px;
  background: #666;
}
```
